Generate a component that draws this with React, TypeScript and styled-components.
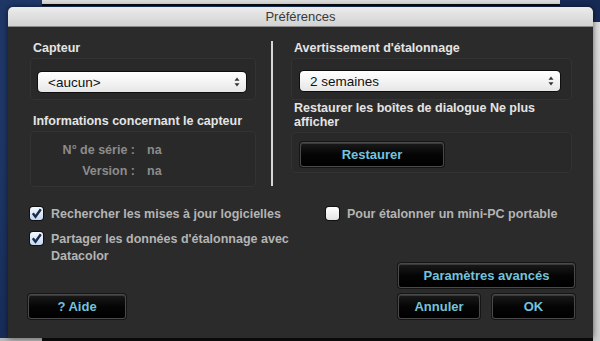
import styled, { createGlobalStyle } from "styled-components";

const GlobalStyle = createGlobalStyle`
    html, body {
        margin: 0;
        padding: 0;
        background: #1b3363;
        font-family: "Liberation Sans", Arial, sans-serif;
    }
`;

const Desktop = styled.div`
    width: 600px;
    height: 341px;
    overflow: hidden;
    box-sizing: border-box;
    padding: 7px 0 0 8px;
    background:
        linear-gradient(#dcdcdc 0 4px, #0c0c0c 4px 6px, transparent 6px) 42px 0 / 518px 7px no-repeat,
        linear-gradient(#dedede, #cfcfcf) 593px 22px / 7px 319px no-repeat,
        linear-gradient(#b9b9b9, #b9b9b9) 0 338px / 42px 3px no-repeat,
        linear-gradient(#0d0d0d, #0d0d0d) 42px 338px / 551px 3px no-repeat,
        radial-gradient(circle at 30% 20%, #27457c, #162b55 70%);
`;

const Dialog = styled.div`
    width: 585px;
    height: 331px;
    display: flex;
    flex-direction: column;
    background: #2b2b2b;
    border-radius: 5px 5px 0 0;
    overflow: hidden;
    box-shadow: 0 0 6px rgba(0, 0, 0, 0.6);
`;

const TitleBar = styled.div`
    height: 20px;
    flex-shrink: 0;
    display: flex;
    align-items: center;
    justify-content: center;
    background: linear-gradient(#ececec, #d2d2d2);
    border-bottom: 1px solid #8a8a8a;
    box-sizing: border-box;
    font-size: 13px;
    color: #3a3a3a;
`;

const Body = styled.div`
    flex: 1;
    display: flex;
    flex-direction: column;
    padding: 14px 18px 0 22px;
`;

const Top = styled.div`
    display: grid;
    grid-template-columns: 226px 2px 284px;
    column-gap: 15px;
    & > :last-child {
        margin-left: 3px;
    }
`;

const Column = styled.div`
    display: flex;
    flex-direction: column;
`;

const Separator = styled.div`
    background: #d6d6d6;
    margin-bottom: 1px;
`;

const SectionLabel = styled.div<{ $gap?: number }>`
    font-size: 12.5px;
    font-weight: bold;
    line-height: 14px;
    color: #e4e4e4;
    padding-left: 3px;
    margin-top: ${(p) => p.$gap ?? 0}px;
    margin-bottom: 3px;
`;

const Group = styled.div<{ $pad: string; $height: number }>`
    height: ${(p) => p.$height}px;
    box-sizing: border-box;
    padding: ${(p) => p.$pad};
    border: 1px solid #333;
    border-radius: 4px;
    background: #292929;
`;

const Select = styled.div`
    height: 20px;
    box-sizing: border-box;
    display: flex;
    align-items: center;
    justify-content: space-between;
    padding: 0 6px 0 10px;
    border-radius: 4px;
    background: linear-gradient(#ffffff, #f1f1f1 60%, #e6e6e6);
    box-shadow: 0 0 0 1px #0e0e0e;
    font-size: 13.5px;
    color: #111;
`;

const InfoGrid = styled.div`
    display: grid;
    grid-template-columns: 96px auto;
    column-gap: 12px;
    row-gap: 5px;
    font-size: 12.5px;
    font-weight: bold;
    line-height: 16px;
    color: #8c8c8c;
`;

const InfoKey = styled.span`
    text-align: right;
`;

const Button = styled.button<{ $width: number }>`
    width: ${(p) => p.$width}px;
    height: 25px;
    padding: 0;
    border: 1px solid #4a4a4a;
    border-radius: 3px;
    background: linear-gradient(#1a1a1a, #050505 50%, #000);
    box-shadow: inset 0 1px 0 #3a3a3a, 0 0 0 1px #151515;
    font-family: "Liberation Sans", Arial, sans-serif;
    font-size: 13px;
    font-weight: bold;
    color: #74c3dc;
    cursor: pointer;
`;

const Options = styled.div`
    display: grid;
    grid-template-columns: 296px auto;
    margin-top: 19px;
    height: 57px;
`;

const OptionList = styled.div`
    display: flex;
    flex-direction: column;
    gap: 8px;
`;

const Option = styled.label`
    display: flex;
    align-items: flex-start;
    gap: 8px;
    font-size: 12.5px;
    font-weight: bold;
    line-height: 17px;
    color: #b4b4b4;
`;

const Box = styled.span<{ $checked: boolean }>`
    width: 13px;
    height: 13px;
    flex-shrink: 0;
    margin-top: 1px;
    border-radius: 3px;
    display: flex;
    align-items: center;
    justify-content: center;
    background: ${(p) =>
        p.$checked
            ? "linear-gradient(#f4f9ff, #c3d8f3)"
            : "linear-gradient(#ffffff, #e4e4e4)"};
    box-shadow: 0 0 0 1px #111;
`;

const Footer = styled.div`
    display: flex;
    justify-content: space-between;
    align-items: flex-end;
    margin-left: -2px;
`;

const RightButtons = styled.div`
    display: flex;
    flex-direction: column;
    align-items: flex-end;
    gap: 6px;
`;

const ButtonRow = styled.div`
    display: flex;
    gap: 12px;
`;

function Arrows() {
    return (
        <svg width="6" height="10" viewBox="0 0 6 10">
            <path d="M3 0.5 L5.5 3.8 H0.5 Z" fill="#333" />
            <path d="M3 9.5 L5.5 6.2 H0.5 Z" fill="#333" />
        </svg>
    );
}

function Check({ checked, children }: { checked: boolean; children: React.ReactNode }) {
    return (
        <Option>
            <Box $checked={checked}>
                {checked && (
                    <svg width="11" height="11" viewBox="0 0 11 11">
                        <path
                            d="M1.8 5.2 L4.5 8.8 L9.8 1.2"
                            fill="none"
                            stroke="#1d2b4a"
                            strokeWidth="2.4"
                        />
                    </svg>
                )}
            </Box>
            <span>{children}</span>
        </Option>
    );
}

export default function App() {
    return (
        <Desktop>
            <GlobalStyle />
            <Dialog>
                <TitleBar>Préférences</TitleBar>
                <Body>
                    <Top>
                        <Column>
                            <SectionLabel>Capteur</SectionLabel>
                            <Group $pad="13px 9px 0 7px" $height={42}>
                                <Select>
                                    <span>&lt;aucun&gt;</span>
                                    <Arrows />
                                </Select>
                            </Group>
                            <SectionLabel $gap={14}>
                                Informations concernant le capteur
                            </SectionLabel>
                            <Group $pad="10px 8px 0 8px" $height={56}>
                                <InfoGrid>
                                    <InfoKey>N° de série :</InfoKey>
                                    <span>na</span>
                                    <InfoKey>Version :</InfoKey>
                                    <span>na</span>
                                </InfoGrid>
                            </Group>
                        </Column>
                        <Separator />
                        <Column>
                            <SectionLabel>Avertissement d'étalonnage</SectionLabel>
                            <Group $pad="12px 11px 0 8px" $height={42}>
                                <Select>
                                    <span>2 semaines</span>
                                    <Arrows />
                                </Select>
                            </Group>
                            <SectionLabel $gap={1}>
                                Restaurer les boîtes de dialogue Ne plus afficher
                            </SectionLabel>
                            <Group $pad="9px 8px 0 8px" $height={41}>
                                <Button $width={144}>Restaurer</Button>
                            </Group>
                        </Column>
                    </Top>
                    <Options>
                        <OptionList>
                            <Check checked>Rechercher les mises à jour logicielles</Check>
                            <Check checked>
                                Partager les données d'étalonnage avec
                                <br />
                                Datacolor
                            </Check>
                        </OptionList>
                        <OptionList>
                            <Check checked={false}>Pour étalonner un mini-PC portable</Check>
                        </OptionList>
                    </Options>
                    <Footer>
                        <Button $width={98}>? Aide</Button>
                        <RightButtons>
                            <Button $width={177}>Paramètres avancés</Button>
                            <ButtonRow>
                                <Button $width={82}>Annuler</Button>
                                <Button $width={83}>OK</Button>
                            </ButtonRow>
                        </RightButtons>
                    </Footer>
                </Body>
            </Dialog>
        </Desktop>
    );
}
